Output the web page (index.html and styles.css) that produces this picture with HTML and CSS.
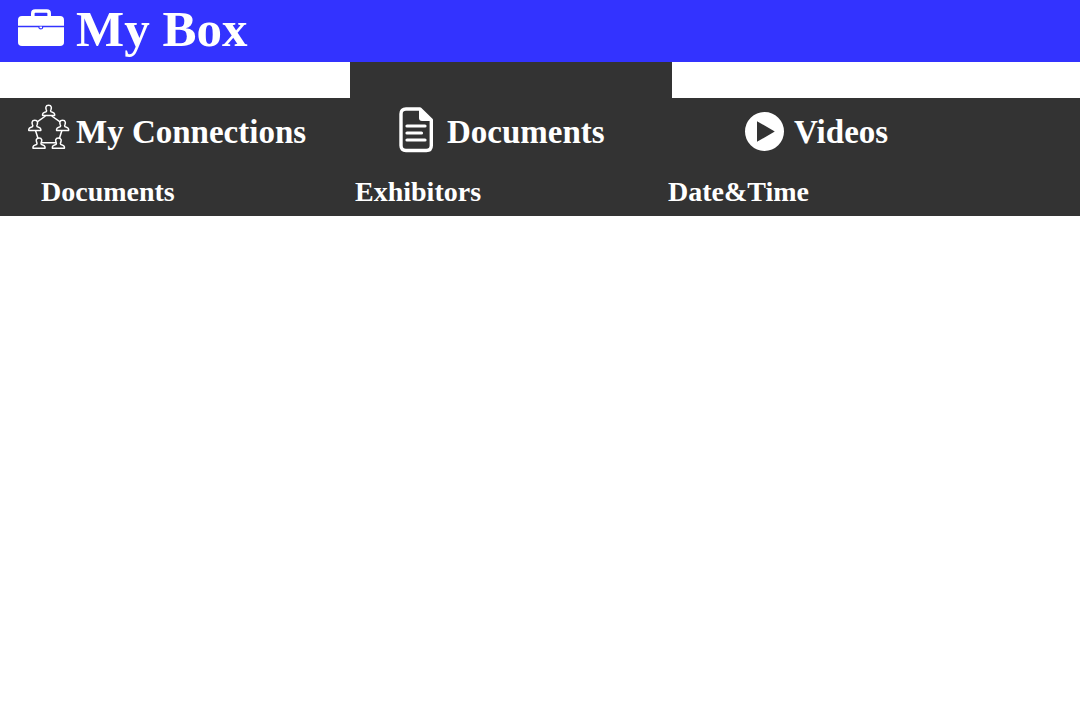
FILE: index.html
```html
<!DOCTYPE html>
<html lang="en">
<head>
<meta charset="utf-8">
<meta name="viewport" content="width=device-width, initial-scale=1">
<title>My Box</title>
<link rel="stylesheet" href="styles.css">
</head>
<body>
<header class="banner">
  <svg class="banner-icon" viewBox="0 0 46 38" aria-hidden="true">
    <path fill="none" stroke="currentColor" stroke-width="3.6" d="M14.8 8V4.4q0-2.4 2.4-2.4h11.6q2.4 0 2.4 2.4V8"/>
    <path fill="currentColor" d="M4 7h38q4 0 4 4v5.8H0V11q0-4 4-4ZM0 18.2h20.2q.4 2.2 2.6 2.2t2.6-2.2H46v15q0 3.8-4 3.8H4q-4 0-4-3.8Z"/>
    <path fill="currentColor" d="M21.6 17.6h2.4v1.6h-2.4z"/>
  </svg>
  <h1 class="banner-title">My Box</h1>
</header>
<nav class="menu">
  <ul class="tabs">
    <li class="tab tab-connections">
      <a class="tab-link" href="#connections">
        <svg class="icon-connections" viewBox="0 0 42 46" fill="none" stroke="currentColor" stroke-width="1.5" stroke-linejoin="round" aria-hidden="true">
          <defs>
            <path id="person" d="M-6 0v-1.4q.3-1.3 2.2-1.8 1.8-.4 1.8-1.2 0-.8-.4-1.6-.5-1.6-.3-2.4.4-1.8 2.7-1.8t2.7 1.8q.2.8-.3 2.4-.4.8-.4 1.6 0 .8 1.8 1.2 1.9.5 2.2 1.8V0Z"/>
          </defs>
          <use href="#person" x="20.6" y="11.5"/>
          <use href="#person" x="6.8" y="26.5"/>
          <use href="#person" x="34.6" y="26.5"/>
          <use href="#person" x="11" y="44.2"/>
          <use href="#person" x="30.4" y="44.2"/>
          <path d="M17.5 12 9.2 17.8M23.7 12l8.4 5.8M7.5 26.5l2.7 8.5M33.9 26.5 31.2 35M13.5 38.8h14.5"/>
        </svg>
        <span>My Connections</span>
      </a>
    </li>
    <li class="tab tab-documents">
      <a class="tab-link" href="#documents">
        <svg class="icon-document" viewBox="0 0 36 46" aria-hidden="true">
          <path fill="none" stroke="currentColor" stroke-width="3.4" stroke-linejoin="round" d="M8 2h14L33.3 13v25.5q0 5-5 5H8q-5 0-5-5V7q0-5 5-5Z"/>
          <path fill="currentColor" d="M21 1.5 34 14H24q-3 0-3-3Z"/>
          <path stroke="currentColor" stroke-width="3.2" stroke-linecap="round" d="M9 19h18M9 26h14.5M9 33h18"/>
        </svg>
        <span>Documents</span>
      </a>
    </li>
    <li class="tab tab-videos">
      <a class="tab-link" href="#videos">
        <svg class="icon-video" viewBox="0 0 40 40" aria-hidden="true">
          <path fill="currentColor" fill-rule="evenodd" d="M20.5 1a19.5 19.5 0 1 1 0 39 19.5 19.5 0 0 1 0-39ZM13 10.2v20.6L30.8 20.5Z"/>
        </svg>
        <span>Videos</span>
      </a>
    </li>
  </ul>
  <ul class="filters">
    <li><a class="filter-link" href="#all-documents">Documents</a></li>
    <li><a class="filter-link" href="#exhibitors">Exhibitors</a></li>
    <li><a class="filter-link" href="#date-time">Date&amp;Time</a></li>
  </ul>
</nav>
</body>
</html>
```
FILE: styles.css
```css
* {
  box-sizing: border-box;
}

body {
  margin: 0;
  background: #fff;
  color: #fff;
  font-family: "Liberation Serif", "Times New Roman", serif;
}

.banner {
  display: flex;
  align-items: flex-start;
  gap: 12px;
  height: 62px;
  padding: 0 18px;
  background: #33f;
}

.banner-icon {
  flex: none;
  width: 46px;
  height: 38px;
  margin-top: 9px;
}

.banner-title {
  margin: 0;
  font-size: 51px;
  line-height: 58px;
  font-weight: 700;
}

.tabs,
.filters {
  display: grid;
  margin: 0;
  padding: 0;
  list-style: none;
}

.tabs {
  grid-template-columns: 350fr 322fr 408fr;
}

.tab {
  padding-top: 36px;
  background: linear-gradient(#fff 36px, #333 36px);
}

.tab-documents {
  background: #333;
}

.tab-link {
  display: flex;
  align-items: center;
  height: 66px;
  color: inherit;
  font-size: 33px;
  line-height: 40px;
  font-weight: 700;
  text-decoration: none;
  white-space: nowrap;
}

.tab-link span {
  padding-top: 2px;
}

.tab-link svg {
  flex: none;
}

.tab-connections .tab-link {
  gap: 6px;
  padding-left: 28px;
}

.tab-documents .tab-link {
  gap: 13px;
  padding-left: 48px;
}

.tab-videos .tab-link {
  gap: 10px;
  padding-left: 72px;
}

.icon-connections {
  width: 42px;
  height: 46px;
  margin-bottom: 8px;
}

.icon-document {
  width: 36px;
  height: 46px;
  margin-bottom: 2px;
}

.icon-video {
  width: 40px;
  height: 40px;
}

.filters {
  grid-template-columns: 314fr 313fr 412fr;
  height: 52px;
  padding-left: 41px;
  background: #333;
}

.filter-link {
  display: block;
  padding-top: 10px;
  color: inherit;
  font-size: 28px;
  line-height: 36px;
  font-weight: 700;
  text-decoration: none;
}
```
